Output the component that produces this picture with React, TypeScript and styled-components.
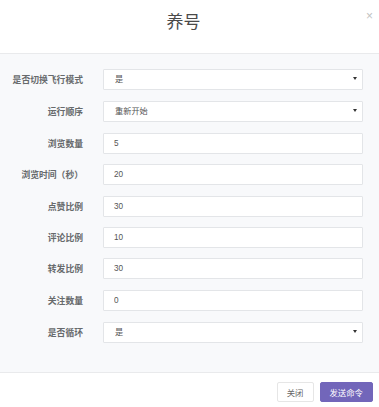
import styled, { createGlobalStyle } from "styled-components";

const GlobalStyle = createGlobalStyle`
  html, body {
    margin: 0;
    padding: 0;
    background: #ffffff;
  }
  body {
    font-family: "Liberation Sans", "Noto Sans CJK SC", sans-serif;
  }
  * {
    box-sizing: border-box;
  }
`;

const Modal = styled.div`
  width: 379px;
  height: 407px;
  background: #ffffff;
  display: flex;
  flex-direction: column;
`;

const Header = styled.div`
  position: relative;
  height: 54px;
  border-bottom: 1px solid #e9eaec;
  display: flex;
  align-items: center;
  justify-content: center;
  padding: 0 12px 12px 0;
`;

const Title = styled.h4`
  margin: 0;
  font-size: 17px;
  font-weight: 400;
  color: #4a4a4a;
  font-family: "Noto Sans CJK SC", sans-serif;
`;

const CloseButton = styled.button`
  position: absolute;
  top: 9px;
  right: 6px;
  border: 0;
  background: none;
  padding: 0;
  font-size: 12px;
  line-height: 14px;
  color: #c2c2c2;
  cursor: pointer;
`;

const Body = styled.div`
  background: #f8f9fb;
  padding: 14px 16px 29px 0;
  display: flex;
  flex-direction: column;
  gap: 10.4px;
  border-bottom: 1px solid #e9eaec;
`;

const Row = styled.div`
  display: grid;
  grid-template-columns: 83px 1fr;
  column-gap: 20px;
  align-items: center;
`;

const Label = styled.label`
  text-align: right;
  font-family: "Noto Sans CJK SC", sans-serif;
  font-size: 8.8px;
  font-weight: 700;
  color: #676a6c;
  white-space: nowrap;
`;

const fieldStyle = `
  width: 100%;
  height: 21px;
  border: 1px solid #e3e5e8;
  border-radius: 1px;
  background: #ffffff;
  padding: 0 10px;
  font-family: "Liberation Sans", "Noto Sans CJK SC", sans-serif;
  font-size: 8.2px;
  color: #555;
  outline: none;
`;

const TextInput = styled.input`
  ${fieldStyle}
`;

const SelectWrap = styled.div`
  position: relative;
  &::after {
    content: "";
    position: absolute;
    right: 6px;
    top: 9px;
    border-left: 2.5px solid transparent;
    border-right: 2.5px solid transparent;
    border-top: 3.5px solid #333;
    pointer-events: none;
  }
`;

const Select = styled.select`
  ${fieldStyle}
  appearance: none;
  -webkit-appearance: none;
  padding-left: 11px;
`;

const Footer = styled.div`
  flex: 1;
  display: flex;
  justify-content: flex-end;
  align-items: flex-start;
  gap: 6px;
  padding: 9px 6px 0 0;
`;

const Button = styled.button<{ $primary?: boolean }>`
  height: 20px;
  padding: 0 9px;
  border-radius: 2px;
  font-family: "Noto Sans CJK SC", sans-serif;
  font-size: 8.4px;
  line-height: 18px;
  cursor: pointer;
  border: 1px solid ${(p) => (p.$primary ? "#7266ba" : "#e6e6e6")};
  background: ${(p) => (p.$primary ? "#7266ba" : "#ffffff")};
  color: ${(p) => (p.$primary ? "#ffffff" : "#666")};
`;

type Field =
  | { label: string; kind: "select"; value: string; options: string[] }
  | { label: string; kind: "input"; value: string };

const fields: Field[] = [
  { label: "是否切换飞行模式", kind: "select", value: "是", options: ["是", "否"] },
  { label: "运行顺序", kind: "select", value: "重新开始", options: ["重新开始", "继续"] },
  { label: "浏览数量", kind: "input", value: "5" },
  { label: "浏览时间（秒）", kind: "input", value: "20" },
  { label: "点赞比例", kind: "input", value: "30" },
  { label: "评论比例", kind: "input", value: "10" },
  { label: "转发比例", kind: "input", value: "30" },
  { label: "关注数量", kind: "input", value: "0" },
  { label: "是否循环", kind: "select", value: "是", options: ["是", "否"] },
];

export default function App() {
  return (
    <>
      <GlobalStyle />
      <Modal>
        <Header>
          <Title>养号</Title>
          <CloseButton>×</CloseButton>
        </Header>
        <Body>
          {fields.map((f) => (
            <Row key={f.label}>
              <Label>{f.label}</Label>
              {f.kind === "select" ? (
                <SelectWrap>
                  <Select defaultValue={f.value}>
                    {f.options.map((o) => (
                      <option key={o}>{o}</option>
                    ))}
                  </Select>
                </SelectWrap>
              ) : (
                <TextInput defaultValue={f.value} />
              )}
            </Row>
          ))}
        </Body>
        <Footer>
          <Button>关闭</Button>
          <Button $primary>发送命令</Button>
        </Footer>
      </Modal>
    </>
  );
}
